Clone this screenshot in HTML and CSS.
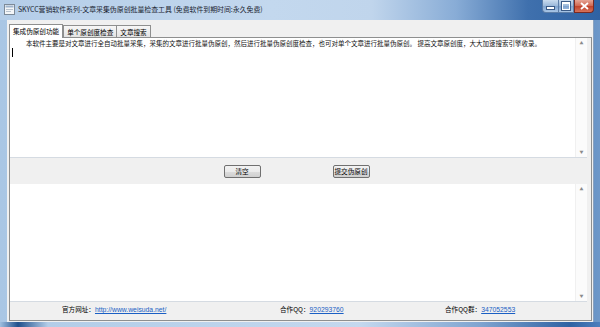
FILE: index.html
```html
<!DOCTYPE html>
<html lang="zh-CN">
<head>
    <meta charset="UTF-8">
    <title>SKYCC营销软件系列-文章采集伪原创批量检查工具</title>
    <link rel="stylesheet" href="styles.css">
</head>
<body>
    <div class="pencere">
        <div class="baslik">
            <svg class="simge" width="11" height="11" viewBox="0 0 11 11">
                <rect x="0.5" y="0.5" width="10" height="10" fill="#f4f6f8" stroke="#7d8a98"/>
                <rect x="1.5" y="1.5" width="8" height="2" fill="#9fb4cc"/>
                <rect x="2" y="5" width="7" height="1" fill="#b9c3cf"/>
                <rect x="2" y="7" width="5" height="1" fill="#b9c3cf"/>
            </svg>
            <span class="baslik-metin">SKYCC营销软件系列-文章采集伪原创批量检查工具 (免费软件到期时间:永久免费)</span>
            <div class="pencere-tuslari">
                <div class="tus-kucult"><span class="cizgi"></span></div>
                <div class="tus-buyut"><span class="kare"></span></div>
                <div class="tus-kapat">
                    <svg width="9" height="8" viewBox="0 0 9 8">
                        <path d="M1 1 L8 7 M8 1 L1 7" stroke="#fff" stroke-width="1.8"/>
                    </svg>
                </div>
            </div>
        </div>

        <div class="istemci">
            <div class="sekmeler">
                <div class="sekme secili">集成伪原创功能</div>
                <div class="sekme">单个原创度检查</div>
                <div class="sekme">文章搜索</div>
            </div>
            <div class="sekme-panel">
                <div class="metin-kutusu ust-kutu">
                    <div class="icerik">
                        <p class="paragraf">本软件主要是对文章进行全自动批量采集，采集的文章进行批量伪原创，然后进行批量伪原创度检查，也可对单个文章进行批量伪原创。 提高文章原创度，大大加速搜索引擎收录。</p>
                        <span class="imlec"></span>
                    </div>
                    <div class="kaydirma">
                        <span class="ok">&#9650;</span>
                        <span class="ok">&#9660;</span>
                    </div>
                </div>
                <div class="tus-satiri">
                    <div class="dugme">清空</div>
                    <div class="dugme">提交伪原创</div>
                </div>
                <div class="metin-kutusu alt-kutu">
                    <div class="icerik"></div>
                    <div class="kaydirma">
                        <span class="ok">&#9650;</span>
                        <span class="ok">&#9660;</span>
                    </div>
                </div>
                <div class="alt-bilgi">
                    <div>官方网址：<a href="#">http://www.weisuda.net/</a></div>
                    <div>合作QQ：<a href="#">920293760</a></div>
                    <div>合作QQ群：<a href="#">347052553</a></div>
                </div>
            </div>
        </div>
        <div class="alt-cerceve"></div>
    </div>
</body>
</html>
```

FILE: styles.css
```css
html, body {
    margin: 0;
    padding: 0;
    width: 600px;
    height: 327px;
    overflow: hidden;
    font-family: "Noto Sans CJK SC", "Liberation Sans", sans-serif;
}

.pencere {
    width: 600px;
    height: 327px;
    display: flex;
    flex-direction: column;
    background: linear-gradient(to right, #a9c6e4 0%, #bcd4ec 40%, #c6daee 62%, #7ea4d0 78%, #4577b3 90%, #6e98c9 100%);
}

/* baslik cubugu */
.baslik {
    height: 20px;
    display: flex;
    align-items: flex-start;
    position: relative;
    background: linear-gradient(to right, #b4cde8 0%, #c3d8ee 45%, #c0d5ec 62%, #88acd6 76%, #3f70ad 88%, #2f62a3 100%);
}

.simge {
    margin: 4px 0 0 4px;
}

.baslik-metin {
    margin: 4px 0 0 3px;
    font-size: 6.9px;
    line-height: 10px;
    color: #1b2633;
    white-space: nowrap;
}

.pencere-tuslari {
    position: absolute;
    top: 0;
    right: 6px;
    display: flex;
    height: 14px;
}

.tus-kucult, .tus-buyut {
    width: 16px;
    height: 13px;
    display: flex;
    justify-content: center;
    align-items: center;
    background: linear-gradient(#c9dbee, #9ab8da 50%, #7fa3cf 51%, #a9c6e6);
    border: 1px solid #5d7ea8;
    border-top: none;
    box-sizing: border-box;
}

.tus-kucult {
    border-radius: 0 0 0 4px;
    border-right: none;
}

.cizgi {
    width: 7px;
    height: 2px;
    margin-top: 4px;
    background: #fff;
    border: 1px solid #3a5a86;
}

.kare {
    width: 6px;
    height: 5px;
    border: 1px solid #fff;
    border-top-width: 2px;
    outline: 1px solid #3a5a86;
}

.tus-kapat {
    width: 20px;
    height: 13px;
    display: flex;
    justify-content: center;
    align-items: center;
    background: linear-gradient(#e6a595, #d0664f 50%, #c0412a 51%, #d5735b);
    border: 1px solid #7b2a22;
    border-top: none;
    border-radius: 0 0 4px 0;
    box-sizing: border-box;
}

/* istemci alani */
.istemci {
    flex: 1;
    margin: 0 6px 0 7px;
    background: #f0f0f0;
    padding: 4px 1px 1px 2px;
    display: flex;
    flex-direction: column;
    border-right: 1px solid #8aa2bf;
}

.sekmeler {
    display: flex;
    height: 13px;
    align-items: flex-end;
}

.sekme {
    height: 12px;
    padding: 0 3px;
    font-size: 6.6px;
    line-height: 12px;
    color: #000;
    white-space: nowrap;
    border: 1px solid #8e8f8f;
    border-bottom: none;
    margin-left: -1px;
    background: linear-gradient(#f7f7f7, #e3e3e3);
    box-sizing: border-box;
}

.sekme.secili {
    margin-left: 0;
    background: #fff;
    position: relative;
    z-index: 1;
    margin-bottom: -1px;
    height: 14px;
}

.sekme:nth-child(2) {
    margin-left: 0;
}

.sekme-panel {
    flex: 1;
    border: 1px solid #8e8f8f;
    background: #f0f0f0;
    display: flex;
    flex-direction: column;
}

.metin-kutusu {
    display: flex;
    background: #fff;
    border-bottom: 1px solid #d5dbe2;
    margin-right: 4px;
}

.ust-kutu {
    height: 119px;
}

.alt-kutu {
    height: 117px;
}

.icerik {
    flex: 1;
    padding: 1px 3px;
}

.paragraf {
    margin: 0;
    font-size: 6.5px;
    line-height: 9px;
    text-indent: 13px;
    color: #111;
    white-space: nowrap;
}

.imlec {
    display: block;
    width: 1px;
    height: 9px;
    background: #000;
    margin-left: -1px;
}

.kaydirma {
    width: 11px;
    border-left: 1px solid #f0f0f0;
    background: #fbfbfb;
    display: flex;
    flex-direction: column;
    justify-content: space-between;
    align-items: center;
    padding: 3px 0 2px 0;
}

.ok {
    font-size: 4px;
    line-height: 5px;
    color: #8a8a8a;
}

.tus-satiri {
    height: 26px;
    display: flex;
    justify-content: center;
    align-items: center;
    gap: 72px;
    padding-right: 8px;
}

.dugme {
    width: 37px;
    height: 13px;
    box-sizing: border-box;
    border: 1px solid #707070;
    border-radius: 2px;
    background: linear-gradient(#f2f2f2, #ebebeb 50%, #dddddd 51%, #cfcfcf);
    font-size: 6.6px;
    line-height: 11px;
    text-align: center;
    color: #000;
    white-space: nowrap;
}

.alt-bilgi {
    flex: 1;
    display: grid;
    grid-template-columns: 218px 165px auto;
    align-items: center;
    padding: 0 0 4px 52px;
    font-size: 6.6px;
    color: #000;
    white-space: nowrap;
}

.alt-bilgi a {
    color: #1a5fc4;
    font-family: "Liberation Sans", sans-serif;
    font-size: 6.8px;
}

.alt-cerceve {
    height: 5px;
    background: linear-gradient(to right, #9fbfe0 0%, #20508c 3%, #b3cde8 8%, #c4d8ee 60%, #7fa4d0 80%, #2f62a3 95%, #4d7fbd 100%);
}
```
